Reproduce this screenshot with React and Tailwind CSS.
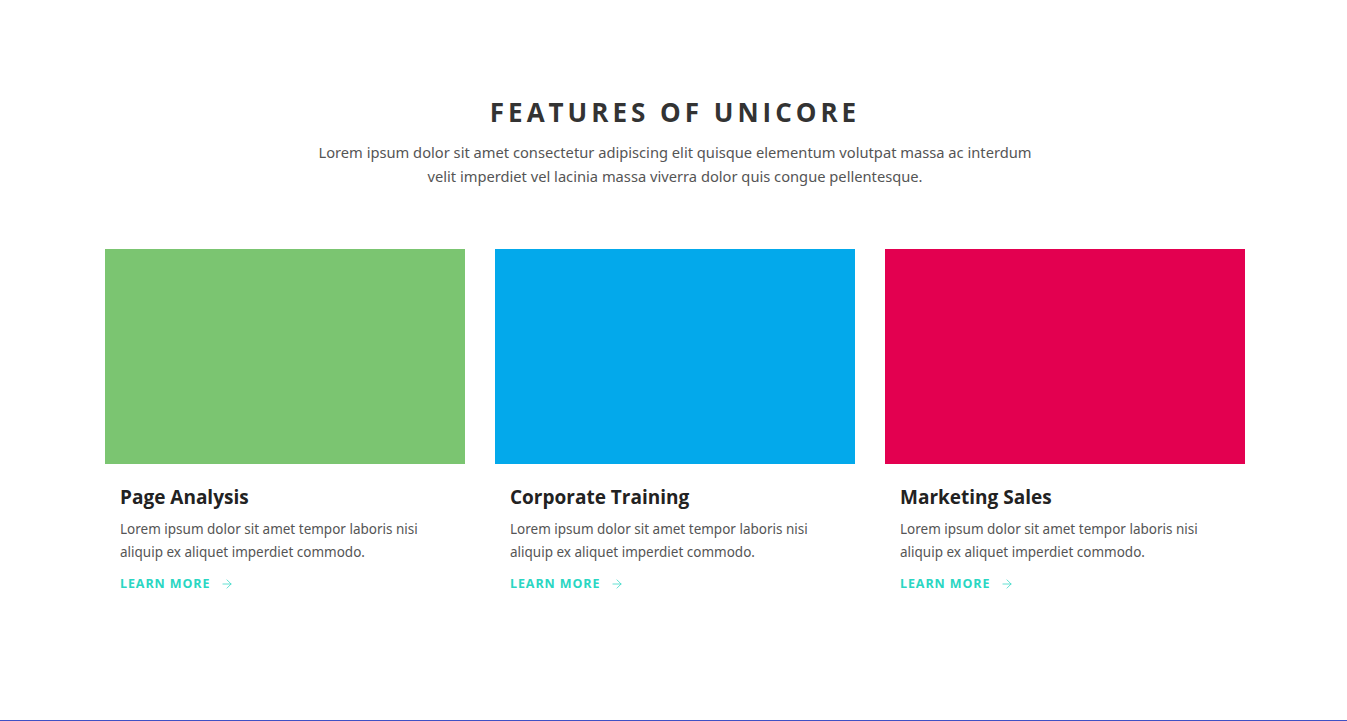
import { ArrowRight } from 'lucide-react';

const features = [
    { title: 'Page Analysis', color: 'bg-[#7bc571]' },
    { title: 'Corporate Training', color: 'bg-[#03a9eb]' },
    { title: 'Marketing Sales', color: 'bg-[#e30050]' },
];

const App = () => {
    return (
        <div className="h-[721px] bg-white border-b border-[#3f51c5] overflow-hidden">
            <div className="w-[1140px] ml-[105px] pt-[96px]">
                {/* Section heading */}
                <div className="text-center">
                    <h2 className="text-[26px] leading-[32px] font-bold tracking-[4px] text-[#333] uppercase" style={{ fontFamily: '"Open Sans", Arial, sans-serif' }}>
                        Features of Unicore
                    </h2>
                    <p className="mt-[12px] text-[14.7px] leading-[24px] text-[#555] w-[740px] mx-auto" style={{ fontFamily: '"Noto Sans", Arial, sans-serif' }}>
                        Lorem ipsum dolor sit amet consectetur adipiscing elit quisque elementum volutpat massa ac interdum velit imperdiet vel lacinia massa viverra dolor quis congue pellentesque.
                    </p>
                </div>

                {/* Cards */}
                <div className="grid grid-cols-3 gap-[30px] mt-[61px]">
                    {features.map((f) => (
                        <div key={f.title}>
                            <div className={`h-[215px] ${f.color}`} />
                            <div className="px-[15px] pt-[21px]">
                                <h3 className="text-[19px] leading-[24px] font-bold text-[#222]" style={{ fontFamily: '"Open Sans", Arial, sans-serif' }}>
                                    {f.title}
                                </h3>
                                <p className="mt-[9px] text-[13.5px] leading-[23px] text-[#555]" style={{ fontFamily: '"Noto Sans", Arial, sans-serif' }}>
                                    Lorem ipsum dolor sit amet tempor laboris nisi aliquip ex aliquet imperdiet commodo.
                                </p>
                                <a href="#" className="mt-[11px] inline-flex items-center gap-[10px] text-[12.5px] font-bold tracking-[0.9px] text-[#2ad6c2] uppercase" style={{ fontFamily: '"Open Sans", Arial, sans-serif' }}>
                                    Learn more
                                    <ArrowRight className="w-[14px] h-[14px]" strokeWidth={1.25} />
                                </a>
                            </div>
                        </div>
                    ))}
                </div>
            </div>
        </div>
    );
};

export default App;
